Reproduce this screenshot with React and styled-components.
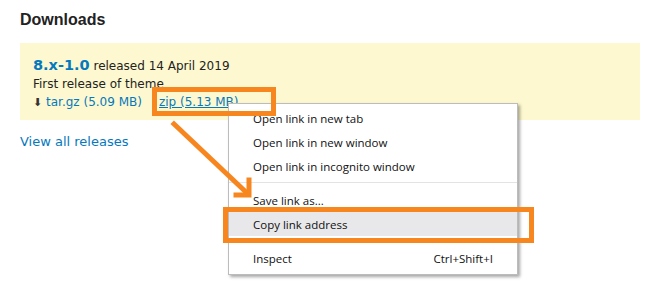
import styled, { createGlobalStyle } from 'styled-components';

const GlobalStyle = createGlobalStyle`
  html, body {
    margin: 0;
    background: #ffffff;
  }
`;

const ORANGE = '#f7861e';
const LINK = '#0678be';

const Page = styled.div`
  position: relative;
  width: 659px;
  height: 286px;
  box-sizing: border-box;
  padding: 10px 19px 0 20px;
  overflow: hidden;
  font-family: 'DejaVu Sans', Verdana, sans-serif;
`;

const Heading = styled.h2`
  margin: 0;
  font-family: 'Liberation Sans', Arial, sans-serif;
  font-size: 16px;
  font-weight: bold;
  line-height: 20px;
  color: #222222;
`;

const ReleaseBox = styled.div`
  margin-top: 13px;
  height: 77px;
  box-sizing: border-box;
  padding: 13px 13px 0;
  background: #fdf8cf;
  color: #222222;
  font-size: 12px;
  line-height: 18px;
`;

const Version = styled.a`
  font-size: 14.5px;
  font-weight: bold;
  color: ${LINK};
  text-decoration: none;
`;

const FileRow = styled.div`
  display: flex;
  gap: 17px;
  color: ${LINK};
`;

const DownIcon = styled.span`
  color: #333333;
  font-size: 11px;
`;

const FileLink = styled.a`
  color: ${LINK};
  text-decoration: ${(p) => (p.underline ? 'underline' : 'none')};
`;

const ViewAll = styled.a`
  display: block;
  margin-top: 14px;
  font-size: 13px;
  color: ${LINK};
  text-decoration: none;
`;

const Menu = styled.ul`
  position: absolute;
  left: 228px;
  top: 103px;
  width: 290px;
  margin: 0;
  padding: 2px 0 4px;
  list-style: none;
  box-sizing: border-box;
  background: #ffffff;
  border: 1px solid #bcbcbc;
  box-shadow: 2px 2px 3px rgba(0, 0, 0, 0.35);
  font-family: 'Open Sans', 'Noto Sans', sans-serif;
  font-size: 11.5px;
  color: #111111;
`;

const MenuItem = styled.li`
  display: flex;
  justify-content: space-between;
  align-items: center;
  height: 24px;
  padding: 0 24px 0 24px;
  background: ${(p) => (p.active ? '#e8e8ea' : 'transparent')};
`;

const Separator = styled.li`
  height: 1px;
  margin: 4px 0 5px 0;
  background: #e3e3e3;
`;

const Highlight = styled.div`
  position: absolute;
  box-sizing: border-box;
  border: 5px solid ${ORANGE};
  left: ${(p) => p.x}px;
  top: ${(p) => p.y}px;
  width: ${(p) => p.w}px;
  height: ${(p) => p.h}px;
`;

const Arrow = styled.svg`
  position: absolute;
  left: 0;
  top: 0;
  pointer-events: none;
`;

export default function App() {
  return (
    <>
      <GlobalStyle />
      <Page>
        <Heading>Downloads</Heading>
        <ReleaseBox>
          <div>
            <Version>8.x-1.0</Version> released 14 April 2019
          </div>
          <div>First release of theme</div>
          <FileRow>
            <span>
              <DownIcon>⬇</DownIcon> <FileLink>tar.gz (5.09 MB)</FileLink>
            </span>
            <FileLink underline>zip (5.13 MB)</FileLink>
          </FileRow>
        </ReleaseBox>
        <ViewAll>View all releases</ViewAll>

        <Menu>
          <MenuItem>Open link in new tab</MenuItem>
          <MenuItem>Open link in new window</MenuItem>
          <MenuItem>Open link in incognito window</MenuItem>
          <Separator />
          <MenuItem>Save link as...</MenuItem>
          <MenuItem active>Copy link address</MenuItem>
          <Separator />
          <MenuItem>
            <span>Inspect</span>
            <span>Ctrl+Shift+I</span>
          </MenuItem>
        </Menu>

        <Highlight x={152} y={87} w={124} h={29} />
        <Highlight x={223} y={207} w={311} h={36} />

        <Arrow width="659" height="286">
          <g stroke={ORANGE} strokeWidth="5" fill="none" strokeLinecap="square">
            <line x1="174" y1="124" x2="247" y2="193" />
            <polyline points="249,180 249,195 236,195" />
          </g>
        </Arrow>
      </Page>
    </>
  );
}
